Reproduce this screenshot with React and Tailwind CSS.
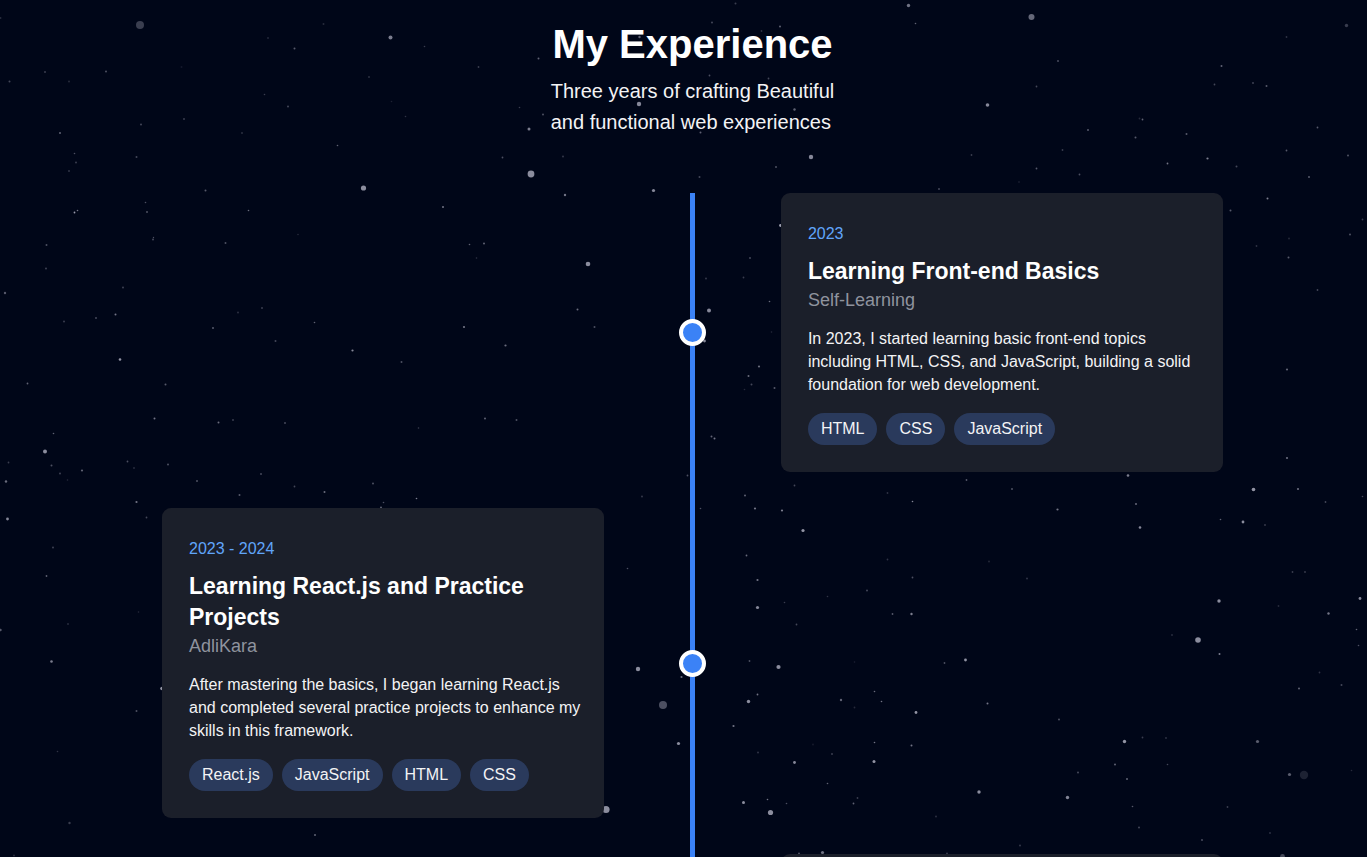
import React from "react";

// Each star is [x, y, radius, opacity].
const STARS = [
  [0.5, 18, 1, 0.2], [140, 25, 4, 0.26], [390.5, 37.5, 2, 0.55], [294.5, 48.5, 1, 0.45],
  [323.5, 24, 1, 0.2], [268, 38, 1, 0.18], [424.5, 46.5, 0.8, 0.3], [181.5, 67, 1, 0.1],
  [45, 72, 1, 0.3], [106, 71.5, 1, 0.4], [9.5, 81.5, 1, 0.35], [69, 81.5, 1, 0.2],
  [369, 77, 1, 0.22], [264.5, 94.5, 0.8, 0.3], [288, 106.5, 1, 0.35], [391.5, 101.5, 0.8, 0.15],
  [405.5, 116.5, 0.8, 0.25], [141, 124.5, 1, 0.35], [184, 119, 1, 0.3], [242, 133, 1, 0.22],
  [60, 133, 1, 0.5], [74.5, 153.5, 0.8, 0.4], [76, 162.5, 1, 0.3], [69, 171, 1, 0.25],
  [136.5, 157, 1, 0.35], [337.5, 145.5, 0.8, 0.5], [363.5, 188, 2.6, 0.62], [205.5, 190.5, 1, 0.45],
  [443, 207, 1, 0.6], [145.5, 202.5, 0.8, 0.4], [147, 212, 1, 0.4], [74.5, 212.5, 0.9, 0.8],
  [77.5, 210.5, 0.8, 0.6], [248.5, 210.5, 0.8, 0.55], [153, 239.5, 1, 0.35], [153.5, 237.5, 0.7, 0.4],
  [225.5, 243, 1, 0.4], [298, 234.5, 0.8, 0.2], [46.5, 245, 1, 0.4],
  [46, 268.5, 0.9, 0.35], [5, 293, 1.2, 0.45], [123, 287.5, 0.9, 0.35], [64, 321.5, 1, 0.3],
  [96, 318, 1, 0.35], [115.5, 314.5, 1, 0.6], [238, 312.5, 0.9, 0.25], [262, 308, 1, 0.3],
  [213, 328, 1, 0.45], [275.5, 341, 1, 0.35], [314.5, 322.5, 0.8, 0.5], [352.5, 350.5, 1.1, 0.7],
  [401.5, 362, 1, 0.4], [120, 359.5, 1.3, 0.65], [27.5, 383.5, 0.9, 0.5], [165.5, 384.5, 1, 0.45],
  [154.5, 418.5, 1, 0.6], [218.5, 422.5, 1, 0.55], [233, 420, 1, 0.3], [285, 423, 1, 0.35],
  [53.5, 433.5, 0.8, 0.5], [45, 451.5, 2, 0.62], [418.5, 428, 0.8, 0.3], [8.5, 462.5, 0.9, 0.3],
  [51.5, 465.5, 1, 0.4], [60, 473.5, 0.9, 0.35], [67.5, 480, 0.8, 0.2], [82, 470.5, 1.1, 0.5],
  [127.5, 461.5, 0.9, 0.4], [134, 468, 1, 0.2], [168, 464.5, 1, 0.4], [6, 481.5, 1.2, 0.55],
  [197, 481, 1, 0.4], [261, 474, 1, 0.35], [239.5, 495, 1, 0.45], [294.5, 486.5, 0.9, 0.35],
  [324.5, 492, 1, 0.55], [373, 483.5, 1, 0.4], [416.5, 498.5, 0.8, 0.65], [136.5, 502, 1.1, 0.6],
  [383.5, 502.5, 0.8, 0.4], [381, 507.5, 1, 0.5],
  [7.5, 519, 1.4, 0.6], [146.5, 517.5, 0.9, 0.35], [53, 547.5, 0.9, 0.35], [46.5, 576, 0.9, 0.5],
  [138.5, 612, 0.8, 0.2], [68, 624, 1, 0.2], [0.5, 630, 1.2, 0.45], [51.5, 661.5, 1.3, 0.55],
  [162, 688.5, 1.8, 0.65], [136.5, 711, 1, 0.4], [57.5, 751.5, 0.8, 0.25], [69.5, 823, 1.2, 0.3],
  [14, 855.5, 1, 0.2], [315, 835, 1, 0.5],
  [735.5, 3.5, 1, 0.3], [712, 22.5, 1, 0.35], [780, 26.5, 1, 0.5], [761.5, 31, 0.9, 0.25],
  [639.5, 37, 1.2, 0.5], [709.5, 75.5, 0.9, 0.4], [768.5, 78.5, 0.9, 0.35], [639, 104, 2.2, 0.6],
  [543, 114.5, 1, 0.4], [794.5, 109.5, 1.2, 0.5], [529, 129, 1.5, 0.55], [538.5, 58.5, 1, 0.5],
  [700.5, 132.5, 1, 0.5], [563, 156.5, 0.9, 0.3], [811, 157, 2.2, 0.6], [776, 167, 1, 0.4],
  [699.5, 177, 1, 0.35], [653.5, 190.5, 1.6, 0.6], [531, 174, 3.4, 0.62], [565, 195, 1.2, 0.6],
  [502.5, 157.5, 0.9, 0.4], [478.5, 67, 0.9, 0.3], [519.5, 107.5, 0.8, 0.3],
  [469.5, 244.5, 0.8, 0.5], [484, 243.5, 1, 0.5], [476.5, 258, 0.8, 0.25], [588, 264, 2.3, 0.62],
  [577.5, 309.5, 1, 0.55], [464, 327, 1.1, 0.6], [594.5, 327, 1, 0.4], [505.5, 345.5, 1.1, 0.55],
  [485, 418.5, 1, 0.5], [516.5, 420, 1, 0.4], [642, 496.5, 0.9, 0.3], [687.5, 475.5, 0.9, 0.4],
  [700.5, 508.5, 0.8, 0.4], [627.5, 568.5, 0.8, 0.4], [706, 278.5, 0.9, 0.3], [750, 258, 1, 0.35],
  [743.5, 277.5, 0.9, 0.3], [709, 310.5, 2, 0.6], [704.5, 341, 1.4, 0.6], [769.5, 301.5, 0.8, 0.55],
  [771.5, 332, 0.8, 0.2], [780.5, 225.5, 1.4, 0.7], [759, 366.5, 1.1, 0.55], [748.5, 376, 1, 0.55],
  [751.5, 384.5, 1, 0.35], [744.5, 389.5, 0.8, 0.2], [774.5, 388, 1, 0.45], [711.5, 436.5, 1, 0.5],
  [714.5, 438.5, 1, 0.6], [638, 669, 2.2, 0.62], [663, 705, 4, 0.34], [678.5, 743.5, 1.6, 0.62],
  [681.5, 677, 1.1, 0.55], [733.5, 726, 1.1, 0.6], [606, 809.5, 3.6, 0.62],
  [745, 495.5, 1, 0.5], [794.5, 485.5, 0.9, 0.35], [755, 508.5, 1.1, 0.6], [782, 510.5, 1.1, 0.65],
  [803, 530.5, 1.6, 0.65], [887.5, 493, 0.9, 0.25], [912.5, 501.5, 0.8, 0.7], [966.5, 480, 0.9, 0.45],
  [1012, 489, 1, 0.4], [1057.5, 509.5, 1.1, 0.6], [746.5, 555.5, 0.9, 0.55], [757.5, 580, 1.1, 0.6],
  [757.5, 607.5, 1.6, 0.6], [887.5, 559.5, 0.9, 0.25], [989, 561.5, 0.9, 0.2], [912.5, 577.5, 0.9, 0.4],
  [867, 590.5, 1, 0.35], [827.5, 596.5, 0.8, 0.25], [784.5, 602.5, 0.8, 0.3], [1027, 578.5, 1, 0.25],
  [892.5, 614, 0.9, 0.45], [911.5, 614, 1.2, 0.65], [796.5, 624.5, 0.9, 0.35], [749.5, 661, 0.9, 0.4],
  [778.5, 667, 2.1, 0.62], [854.5, 662, 0.8, 0.15], [944.5, 663, 0.9, 0.4], [965.5, 660, 1.4, 0.65],
  [757.5, 694.5, 0.9, 0.6], [748.5, 701.5, 1.7, 0.62], [841, 700, 1.2, 0.5], [874.5, 691.5, 0.8, 0.55],
  [881.5, 701.5, 0.8, 0.6], [854.5, 707.5, 0.9, 0.2], [916, 712.5, 1.4, 0.65], [987.5, 703.5, 1, 0.6],
  [1059, 719.5, 1, 0.4], [874.5, 742.5, 0.8, 0.6], [911.5, 745.5, 1, 0.6], [758, 752.5, 1, 0.25],
  [813, 744.5, 0.9, 0.12], [832, 754, 1, 0.3], [794.5, 762.5, 1.4, 0.6], [874, 761.5, 1.5, 0.65],
  [827.5, 783.5, 0.8, 0.5], [979, 792, 1.7, 0.62], [743.5, 802.5, 1.5, 0.62], [767.5, 799.5, 0.8, 0.6],
  [786.5, 803.5, 0.8, 0.4], [770.5, 812.5, 2.6, 0.62], [853.5, 803.5, 0.9, 0.5], [857.5, 798, 0.9, 0.3],
  [936, 816.5, 0.9, 0.25], [1020, 845.5, 0.9, 0.3], [822.5, 852.5, 1.6, 0.5], [799, 853.5, 1, 0.4],
  [947, 853.5, 0.9, 0.3],
  [1128, 475.5, 1.3, 0.55], [1253.5, 489.5, 1.8, 0.65], [1298, 489, 1.1, 0.55], [1136, 504, 1.1, 0.5],
  [1140, 527.5, 1.3, 0.6], [1243, 522, 1.4, 0.62], [1220.5, 519.5, 0.8, 0.5], [1265, 525, 0.9, 0.3],
  [1325.5, 502, 0.9, 0.35], [1362.5, 496.5, 0.8, 0.35], [1292.5, 572, 0.9, 0.3], [1305, 572, 0.9, 0.3],
  [1219, 601, 1.7, 0.62], [1278.5, 606, 0.9, 0.2], [1360, 598.5, 1.4, 0.6], [1328.5, 613.5, 1.2, 0.6],
  [1198, 640, 2.8, 0.62], [1172, 635, 1, 0.2], [1356.5, 629.5, 0.8, 0.5], [1358.5, 645.5, 0.8, 0.4],
  [1219.5, 654, 1, 0.65], [1299, 688.5, 1, 0.5], [1319.5, 672.5, 0.9, 0.25], [1341.5, 685, 1, 0.35],
  [1124.5, 741.5, 1.7, 0.65], [1142.5, 737.5, 0.9, 0.3], [1166, 738, 0.9, 0.25], [1257.5, 741.5, 1.6, 0.4],
  [1115, 764.5, 1, 0.5], [1167.5, 764.5, 0.8, 0.35], [1078, 772.5, 0.9, 0.4], [1127, 779, 1, 0.5],
  [1289.5, 774.5, 1.6, 0.4], [1304, 775, 4.2, 0.13], [1351.5, 770.5, 0.8, 0.2], [1067.5, 797.5, 1.7, 0.58],
  [1132.5, 806.5, 0.8, 0.45], [1227.5, 807, 0.9, 0.3], [1139, 827.5, 1, 0.35], [1202, 840, 1.1, 0.35],
  [1270, 833, 0.9, 0.25], [1282.5, 856.5, 2.4, 0.3],
  [908.5, 5.5, 1.7, 0.5], [915.5, 23.5, 0.8, 0.5], [1031.5, 17, 3, 0.45], [1346.5, 25.5, 1.7, 0.25],
  [1286.5, 37, 0.9, 0.25], [1058, 61, 1.1, 0.35], [1036.5, 86.5, 0.9, 0.35], [1221.5, 66, 1, 0.5],
  [987.5, 105, 1.8, 0.6], [1214.5, 84.5, 0.9, 0.35], [1253, 83, 0.9, 0.35], [1266.5, 86, 1, 0.45],
  [1139.5, 118.5, 0.9, 0.2], [1142.5, 119.5, 0.9, 0.5], [1088, 130, 1, 0.45], [1135.5, 137.5, 1, 0.45],
  [1186.5, 134, 1, 0.45], [1317.5, 127.5, 0.9, 0.45], [1062.5, 150, 0.9, 0.3], [971.5, 155, 0.9, 0.3],
  [1036.5, 168.5, 0.9, 0.45], [1167.5, 163.5, 0.9, 0.6], [1207.5, 158.5, 1.1, 0.65], [1286.5, 150.5, 0.9, 0.45],
  [1348, 155.5, 0.9, 0.45], [1236.5, 166.5, 1, 0.35], [1309, 177, 1, 0.45], [1079.5, 174.5, 0.9, 0.4],
  [1019, 182, 0.8, 0.2], [939, 189, 1, 0.35],
  [1267.5, 198.5, 1, 0.65], [1230.5, 210.5, 1, 0.45], [1350, 234.5, 1, 0.4], [1362.5, 219.5, 0.9, 0.3],
  [1256.5, 246, 0.9, 0.25], [1289, 238.5, 0.9, 0.2], [1288.5, 257.5, 1, 0.45], [1317.5, 290, 0.9, 0.35],
  [1287, 369.5, 1.1, 0.5], [1287, 458, 1.1, 0.55],
];

const EXPERIENCES = [
  {
    period: "2023",
    title: "Learning Front-end Basics",
    place: "Self-Learning",
    text: "In 2023, I started learning basic front-end topics including HTML, CSS, and JavaScript, building a solid foundation for web development.",
    skills: ["HTML", "CSS", "JavaScript"],
  },
  {
    period: "2023 - 2024",
    title: "Learning React.js and Practice Projects",
    place: "AdliKara",
    text: "After mastering the basics, I began learning React.js and completed several practice projects to enhance my skills in this framework.",
    skills: ["React.js", "JavaScript", "HTML", "CSS"],
  },
];

function StarField() {
  return (
    <svg className="pointer-events-none absolute left-0 top-0 h-[857px] w-[1367px]" viewBox="0 0 1367 857" aria-hidden="true">
      {STARS.map(([x, y, r, o], i) => (
        <circle key={i} cx={x} cy={y} r={r} fill="#e0e0f0" opacity={r < 1.3 ? o * 0.85 : o} />
      ))}
    </svg>
  );
}

function Marker() {
  return (
    <div className="flex justify-center">
      <span className="size-[27px] rounded-full border-4 border-white bg-[#3b82f6]" />
    </div>
  );
}

function Card({ item, side }) {
  const column = side === "left" ? "col-start-1" : "col-start-3";
  return (
    <article className={`${column} row-start-1 rounded-[9px] bg-[#1b1f2a] py-[27px] pl-[27px] pr-[22px]`}>
      <p className="mb-[9px] text-[16px] leading-[27px] text-[#60a5fa]">{item.period}</p>
      <h2 className="text-[23px] font-bold leading-[31px]">{item.title}</h2>
      <p className="mb-[13px] text-[18px] leading-[27px] text-[#8f939e]">{item.place}</p>
      <p className="text-[16px] leading-[23px] text-[#f3f3f5]">{item.text}</p>
      <ul className="mt-[17px] flex flex-wrap gap-[9px]">
        {item.skills.map((skill) => (
          <li key={skill} className="rounded-full bg-[#2a3a5c] px-[13px] pb-[5px] pt-1 text-[16px] leading-[23px] text-[#f3f3f5]">
            {skill}
          </li>
        ))}
      </ul>
    </article>
  );
}

export default function App() {
  return (
    <main className="relative h-screen overflow-hidden bg-[#000618] pl-[18px] font-['Liberation_Sans',Arial,sans-serif] text-white">
      <StarField />
      <div className="relative mx-auto max-w-[1061px] pt-[22px]">
        <header className="mx-auto mb-[55px] flex w-fit flex-col items-center">
          <h1 className="mb-[9px] text-[40px] font-bold leading-[45px]">My Experience</h1>
          <p className="text-[20px] leading-[31px] text-[#f3f3f5]">
            Three years of crafting Beautiful
            <br />
            and functional web experiences
          </p>
        </header>

        <div className="relative">
          <div className="absolute inset-y-0 left-0 right-0 flex justify-center">
            <span className="w-[5px] bg-[#3b82f6]" />
          </div>
          <ol className="relative flex flex-col gap-[36px]">
            {EXPERIENCES.map((item, i) => (
              <li key={item.period} className="grid grid-cols-[5fr_2fr_5fr] items-center">
                <Card item={item} side={i % 2 === 0 ? "right" : "left"} />
                <div className="col-start-2 row-start-1">
                  <Marker />
                </div>
              </li>
            ))}
            <li className="grid grid-cols-[5fr_2fr_5fr]">
              <article className="col-start-3 h-[279px] rounded-[9px] bg-[#1b1f2a]" />
            </li>
          </ol>
        </div>
      </div>
    </main>
  );
}
